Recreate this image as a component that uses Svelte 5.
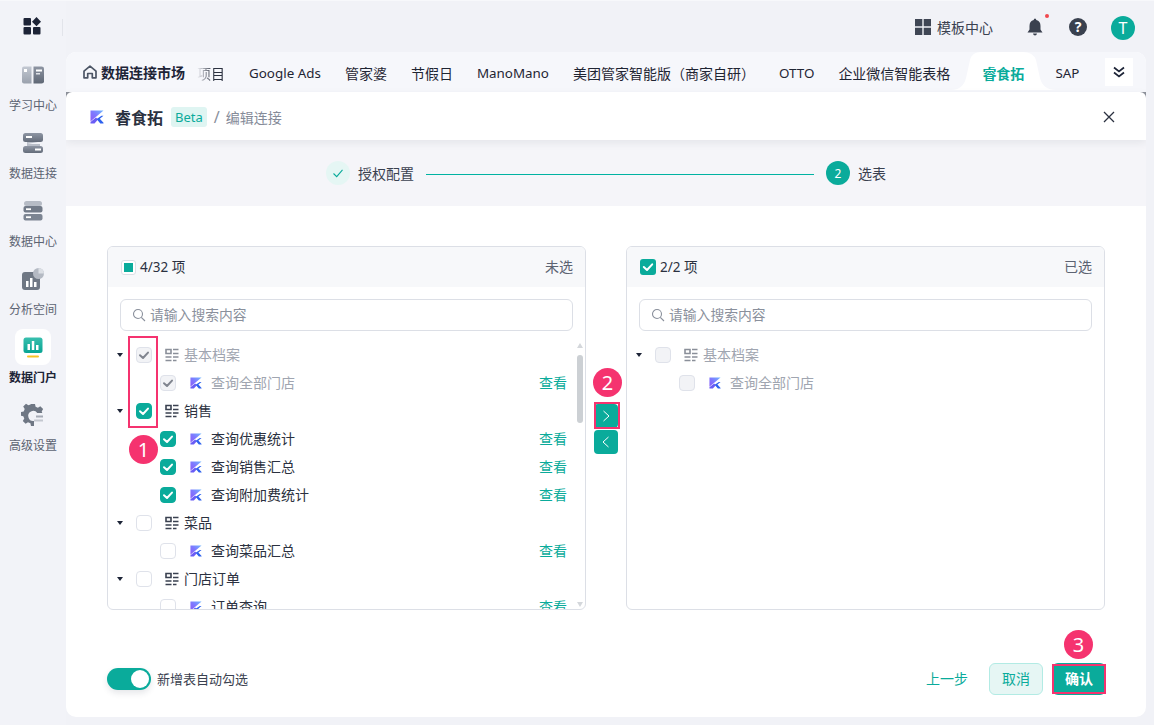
<script>
  const tabs = [
    { t:'Google Ads', l:1 }, { t:'管家婆' }, { t:'节假日' }, { t:'ManoMano', l:1 },
    { t:'美团管家智能版（商家自研）' }, { t:'OTTO', l:1 }, { t:'企业微信智能表格' }
  ];
  const nav = [
    { k:'learn', t:'学习中心' }, { k:'conn', t:'数据连接' }, { k:'center', t:'数据中心' },
    { k:'space', t:'分析空间' }, { k:'portal', t:'数据门户', active:true }, { k:'set', t:'高级设置' }
  ];
  const leftTree = [
    { p:1, t:'基本档案', s:'dis' }, { t:'查询全部门店', s:'dis' },
    { p:1, t:'销售', s:'on' }, { t:'查询优惠统计', s:'on' }, { t:'查询销售汇总', s:'on' }, { t:'查询附加费统计', s:'on' },
    { p:1, t:'菜品', s:'' }, { t:'查询菜品汇总', s:'' },
    { p:1, t:'门店订单', s:'' }, { t:'订单查询', s:'' }
  ];
  const rightTree = [ { p:1, t:'基本档案', s:'off' }, { t:'查询全部门店', s:'off' } ];
</script>

{#snippet logo(w)}
  <svg width={w} height={w} viewBox="0 0 14 14" class="logo">
    <defs><linearGradient id="lg" x1="1" y1="0" x2="0" y2="1"><stop offset="0" stop-color="#6fb8ff"/><stop offset=".5" stop-color="#7f78ff"/><stop offset="1" stop-color="#8a5cf6"/></linearGradient></defs>
    <path d="M0.500 0.500H13.500L0.500 11.500Z" fill="url(#lg)"/>
    <path d="M0.500 13.500V12L6 7.500L8 9.500L4.500 13.500Z" fill="#6a5cf5"/>
    <path d="M13.500 5.800L9.800 8.800L13.500 12.800V13.500H10.300L6.600 9.100L11.500 5.800Z" fill="#2e62ee"/>
  </svg>
{/snippet}

{#snippet tableIcon()}
  <svg width="14" height="14" viewBox="0 0 14 14" class="ticon">
    <path d="M1 1.500H6V5.500H1Z" fill="none" stroke="currentColor" stroke-width="1.600"/>
    <path d="M0.500 9H6.500M0.500 12.500H6.500" stroke="currentColor" stroke-width="1.700"/>
    <path d="M8 1.500H13.500M8 5.500H13.500M8 9H13.500M8 12.500H11.500" stroke="currentColor" stroke-width="1.600"/>
  </svg>
{/snippet}

{#snippet check(s)}
  <span class="cb {s}">
    {#if s === 'on' || s === 'dis'}
      <svg width="16" height="16" viewBox="0 0 16 16"><path d="M4 8.200L7 11L12 5.600" fill="none" stroke="currentColor" stroke-width="2" stroke-linecap="round" stroke-linejoin="round"/></svg>
    {/if}
  </span>
{/snippet}

{#snippet tree(list, action)}
  {#each list as r}
    <div class="row" class:child={!r.p} class:grey={r.s === 'dis' || r.s === 'off'}>
      {#if r.p}<span class="caret"></span>{/if}
      {@render check(r.s)}
      {#if r.p}{@render tableIcon()}{:else}{@render logo(12)}{/if}
      <span class="rt">{r.t}</span>
      {#if action && !r.p}<span class="view">查看</span>{/if}
    </div>
  {/each}
{/snippet}

{#snippet navIcon(k)}
  {#if k === 'learn'}
    <svg width="24" height="20" viewBox="0 0 24 20"><defs><linearGradient id="g1" x1="0" y1="0" x2="0" y2="1"><stop offset="0" stop-color="#c3c8d2"/><stop offset="1" stop-color="#9aa1ad"/></linearGradient><linearGradient id="g2" x1="0" y1="0" x2="0" y2="1"><stop offset="0" stop-color="#8e95a3"/><stop offset="1" stop-color="#5f6775"/></linearGradient></defs><path d="M3 1.500H10.500V18.500H3Q1 18.500 1 16.500V3.500Q1 1.500 3 1.500Z" fill="url(#g1)"/><path d="M12.500 1.500H20.500Q23 1.500 23 3.500V16.500Q23 18.500 20.500 18.500H12.500Z" fill="url(#g2)"/><rect x="3" y="4" width="3" height="3" fill="#fff"/><rect x="15" y="4.500" width="6" height="2" fill="#fff"/><rect x="15" y="8" width="4" height="1.500" fill="#dfe2e8"/></svg>
  {:else if k === 'conn'}
    <svg width="22" height="20" viewBox="0 0 22 20"><defs><linearGradient id="g3" x1="0" y1="0" x2="0" y2="1"><stop offset="0" stop-color="#8e95a3"/><stop offset="1" stop-color="#646c7a"/></linearGradient></defs><rect x="1" y="0" width="20" height="9" rx="2.500" fill="url(#g3)"/><rect x="1" y="13" width="20" height="7" rx="2.500" fill="url(#g3)"/><path d="M5 9H16L5 11H18V13H5Z" fill="#b9bec8"/><rect x="4" y="3" width="6" height="2" fill="#fff"/><rect x="13" y="15.500" width="6" height="2" fill="#fff"/></svg>
  {:else if k === 'center'}
    <svg width="20" height="20" viewBox="0 0 20 20"><rect x="1" y="0" width="18" height="5" rx="2.500" fill="#b6bbc5"/><rect x="0.500" y="5" width="19" height="6.500" rx="2" fill="#727a88"/><rect x="0.500" y="13" width="19" height="6.500" rx="2" fill="#7c8492"/><rect x="3" y="7.300" width="5" height="1.800" fill="#fff"/><rect x="3" y="15.300" width="5" height="1.800" fill="#fff"/></svg>
  {:else if k === 'space'}
    <svg width="22" height="22" viewBox="0 0 22 22"><rect x="0" y="4" width="18" height="18" rx="3" fill="#6f7784"/><circle cx="16.500" cy="5.500" r="5.500" fill="#b4b9c3"/><path d="M16.500 5.500V0A5.500 5.500 0 0 1 22 5.500Z" fill="#dcdfe5"/><rect x="4" y="13" width="2.500" height="6" fill="#fff"/><rect x="8" y="10" width="2.500" height="9" fill="#fff"/><rect x="12" y="14" width="2.500" height="5" fill="#fff"/></svg>
  {:else if k === 'portal'}
    <svg width="20" height="21" viewBox="0 0 20 21"><defs><linearGradient id="g4" x1="0" y1="0" x2="0" y2="1"><stop offset="0" stop-color="#39bfae"/><stop offset="1" stop-color="#07a493"/></linearGradient></defs><rect x="0.500" y="0.500" width="19" height="15.500" rx="2.500" fill="url(#g4)"/><rect x="4.500" y="7" width="2.500" height="6" fill="#fff"/><rect x="8.800" y="4" width="2.500" height="9" fill="#fff"/><rect x="13" y="8" width="2.500" height="5" fill="#fff"/><rect x="4" y="18.500" width="12" height="2" rx="1" fill="#f7c325"/></svg>
  {:else}
    <svg width="24" height="24" viewBox="0 0 24 24"><path d="M10 1h4l.6 2.700 2.300 1 2.400-1.400 2.800 2.800-1.400 2.300.6 1.600h-5a5 5 0 1 0-3.300 7.900v5.100h-3l-.6-2.700-2.400-1-2.400 1.500L1.800 18l1.500-2.400-1-2.300L0 12.700V9l2.700-.6 1-2.400L2.200 3.600 5 .8l2.400 1.500 2-.8Z" fill="#6f7784"/><rect x="15" y="12.500" width="7" height="2" fill="#a6abb5"/><rect x="13" y="16.500" width="9" height="2" fill="#c3c7cf"/></svg>
  {/if}
{/snippet}

<div class="app">
  <aside class="side">
    <div class="brand">
      <svg width="18" height="18" viewBox="0 0 18 18"><rect x="0.500" y="1" width="7.500" height="7.500" rx="1" fill="#1d2437"/><path d="M13.500 0L18 4.700L13.500 9.200L9 4.700Z" fill="#1d2437"/><rect x="0.500" y="10" width="7.500" height="7.500" rx="1" fill="#1d2437"/><rect x="10" y="10" width="7.500" height="7.500" rx="1" fill="#1d2437"/></svg>
      <i class="sep"></i>
    </div>
    {#each nav as n}
      <div class="nav" class:active={n.active}>
        <div class="tile">{@render navIcon(n.k)}</div>
        <span>{n.t}</span>
      </div>
    {/each}
  </aside>

  <div class="col">
    <header class="top">
      <div class="tpl">
        <svg width="16" height="16" viewBox="0 0 16 16"><path d="M0 0H7.300V7.300H0ZM8.700 0H16V7.300H8.700ZM0 8.700H7.300V16H0ZM8.700 8.700H16V16H8.700Z" fill="#3f4654"/></svg>
        <span>模板中心</span>
      </div>
      <div class="bell">
        <svg width="16" height="18" viewBox="0 0 16 18"><path d="M8 0.500Q9.200 0.500 9.300 2Q13.500 3 13.500 8V11.500L15.500 14.500H0.500L2.500 11.500V8Q2.500 3 6.700 2Q6.800 0.500 8 0.500ZM6 15.500H10Q9.700 17.500 8 17.500Q6.300 17.500 6 15.500Z" fill="#3a414f"/></svg>
        <i></i>
      </div>
      <span class="help">?</span>
      <span class="avatar">T</span>
    </header>

    <main class="card">
      <div class="tabbar">
        <div class="home">
          <svg width="14" height="14" viewBox="0 0 14 14"><path d="M1 6.200L7 1.200L13 6.200V12.800H9.300V8.500H4.700V12.800H1Z" fill="none" stroke="#4d5666" stroke-width="1.700" stroke-linejoin="round"/></svg>
          <b>数据连接市场</b>
        </div>
        <div class="tabs">
          <span class="tab faded">项目</span>
          {#each tabs as t}<span class="tab" class:latin={t.l}>{t.t}</span>{/each}
          <span class="tab cur">
            <svg class="curbg" viewBox="0 0 105 40" preserveAspectRatio="none"><path d="M0 40Q12 40 15 28L19 10Q21 2 30 2H72Q82 2 85 10L89 28Q92 40 105 40Z" fill="#fff"/></svg>
            <em>睿食拓</em>
          </span>
          <span class="tab latin">SAP</span>
        </div>
        <button class="more" aria-label="more">
          <svg width="12" height="12" viewBox="0 0 12 12"><path d="M1 1.500L6 5.500L11 1.500M1 6.500L6 10.500L11 6.500" fill="none" stroke="#1d2437" stroke-width="1.700"/></svg>
        </button>
      </div>

      <div class="headwrap">
        <div class="head">
          {@render logo(14)}
          <strong>睿食拓</strong>
          <span class="beta">Beta</span>
          <span class="slash">/</span>
          <span class="crumb">编辑连接</span>
          <svg class="close" width="12" height="12" viewBox="0 0 12 12"><path d="M1 1L11 11M11 1L1 11" stroke="#2b3140" stroke-width="1.300"/></svg>
        </div>
      </div>

      <div class="steps">
        <span class="dot done"><svg width="12" height="12" viewBox="0 0 12 12"><path d="M1.500 6.500L4.700 9.700L10.500 2.800" fill="none" stroke="#0aab9b" stroke-width="1.100"/></svg></span>
        <span class="st">授权配置</span>
        <i class="line"></i>
        <span class="dot now">2</span>
        <span class="st">选表</span>
      </div>

      <div class="transfer">
        <section class="panel">
          <div class="ph">
            <span class="hcb half"><i></i></span><span>4/32 项</span><span class="pr">未选</span>
          </div>
          <label class="search">
            <svg width="14" height="14" viewBox="0 0 14 14"><circle cx="6" cy="6" r="4.500" fill="none" stroke="#8a909c" stroke-width="1.100"/><path d="M9.300 9.300L13 13" stroke="#8a909c" stroke-width="1.100"/></svg>
            <span>请输入搜索内容</span>
          </label>
          <div class="list">
            {@render tree(leftTree, true)}
            <i class="arrow up"></i><i class="thumb"></i><i class="arrow down"></i>
          </div>
        </section>

        <div class="mid">
          <button class="mv" aria-label="add"><svg width="10" height="12" viewBox="0 0 10 12"><path d="M2.500 1L8 6L2.500 11" fill="none" stroke="#fff" stroke-width="1"/></svg></button>
          <button class="mv" aria-label="remove"><svg width="10" height="12" viewBox="0 0 10 12"><path d="M7.500 1L2 6L7.500 11" fill="none" stroke="#fff" stroke-width="1"/></svg></button>
        </div>

        <section class="panel">
          <div class="ph">
            <span class="hcb full"><svg width="16" height="16" viewBox="0 0 16 16"><path d="M3.800 8L7 11L12.200 5.300" fill="none" stroke="#fff" stroke-width="2" stroke-linecap="round" stroke-linejoin="round"/></svg></span><span>2/2 项</span><span class="pr">已选</span>
          </div>
          <label class="search">
            <svg width="14" height="14" viewBox="0 0 14 14"><circle cx="6" cy="6" r="4.500" fill="none" stroke="#8a909c" stroke-width="1.100"/><path d="M9.300 9.300L13 13" stroke="#8a909c" stroke-width="1.100"/></svg>
            <span>请输入搜索内容</span>
          </label>
          <div class="list">{@render tree(rightTree, false)}</div>
        </section>
      </div>

      <footer class="foot">
        <span class="toggle"><i></i></span>
        <span class="tl">新增表自动勾选</span>
        <span class="prev">上一步</span>
        <button class="btn cancel">取消</button>
        <button class="btn ok">确认</button>
      </footer>
    </main>
  </div>

  <i class="mark m1"></i>
  <i class="mark m2"></i>
  <i class="mark m3"></i>
  <span class="badge b1">1</span>
  <span class="badge b2">2</span>
  <span class="badge b3">3</span>
</div>

<style>
  :global(body) { margin: 0; background: #f1f2f7; }
  .app {
    position: relative; display: flex; width: 1154px; height: 725px; overflow: hidden;
    font-family: "Noto Sans", "Noto Sans CJK SC", sans-serif; font-size: 14px; color: #1f2533;
    background: #f1f2f7; border-top: 1px solid #f7f8fb; box-sizing: border-box;
  }
  .side { width: 66px; flex: none; display: flex; flex-direction: column; align-items: center; background: #f2f3f8; }
  .brand { position: relative; width: 66px; height: 51px; padding-left: 23px; padding-top: 16px; box-sizing: border-box; margin-bottom: 5px; }
  .brand svg { display: block; }
  .sep { position: absolute; left: 62px; top: 18px; width: 1px; height: 17px; background: #e2e4ea; }
  .nav { width: 66px; height: 60px; margin-bottom: 8px; display: flex; flex-direction: column; align-items: center; font-size: 12px; line-height: 24px; color: #5c6372; }
  .nav span { padding-top: 1px; }
  .tile { width: 36px; height: 36px; flex: none; display: flex; align-items: center; justify-content: center; border-radius: 8px; }
  .nav.active .tile { background: #fff; }
  .nav.active { color: #1d2437; font-weight: 700; }

  .col { flex: 1; min-width: 0; display: flex; flex-direction: column; padding-right: 8px; padding-bottom: 8px; }
  .top { height: 51px; flex: none; display: flex; align-items: center; justify-content: flex-end; padding-top: 3px; box-sizing: border-box; padding-right: 11px; }
  .tpl { display: flex; align-items: center; gap: 6px; font-size: 14px; color: #3a4150; margin-right: 34px; }
  .tpl svg { margin-bottom: 2px; }
  .tpl span { padding-bottom: 3px; }
  .bell { position: relative; width: 16px; height: 18px; margin-right: 26px; margin-bottom: 2px; }
  .bell svg { display: block; }
  .bell i { position: absolute; left: 18px; top: -4px; width: 4px; height: 4px; border-radius: 50%; background: #f0484e; }
  .help { width: 18px; height: 18px; border-radius: 50%; background: #3a414f; color: #fff; font-size: 14px; font-weight: 700; line-height: 18px; text-align: center; margin-right: 24px; margin-bottom: 2px; }
  .avatar { width: 24px; height: 24px; border-radius: 50%; background: #0aab9b; color: #fff; font-size: 16px; line-height: 24px; text-align: center; }

  .card { flex: 1; min-height: 0; background: #fff; border-radius: 10px; overflow: hidden; display: flex; flex-direction: column; }
  .tabbar { height: 40px; flex: none; display: flex; align-items: center; background: #f6f7fb; padding-left: 17px; padding-right: 13px; }
  .home { display: flex; align-items: center; gap: 4px; flex: none; width: 114px; font-size: 14px; white-space: nowrap; }
  .home b { font-weight: 700; color: #1d2437; }
  .tabs { flex: 1; min-width: 0; height: 40px; display: flex; align-items: center; gap: 24px; overflow: hidden; }
  .tab { position: relative; flex: none; font-size: 14px; white-space: nowrap; padding-top: 1px; }
  .tab.latin { font-size: 13.400px; }
  .faded { -webkit-mask-image: linear-gradient(90deg, transparent 0, #000 60%); mask-image: linear-gradient(90deg, transparent 0, #000 60%); color: #2b3140; }
  .cur { width: 42px; margin: 0 7px 0 8px; font-weight: 700; color: #0aab9b; text-align: center; }
  .cur em { position: relative; font-style: normal; }
  .curbg { position: absolute; left: -31px; top: -12px; width: 105px; height: 40px; }
  .more { flex: none; width: 28px; height: 28px; border: 0; padding: 0; background: #fff; display: flex; align-items: center; justify-content: center; }

  .headwrap { flex: none; background: #8c9099; position: relative; z-index: 1; box-shadow: 0 3px 8px rgba(40,50,70,.08); }
  .head { height: 48px; box-sizing: border-box; display: flex; align-items: center; padding: 2px 31px 0 24px; background: #fff; border-radius: 6px 6px 0 0; }
  .head strong { margin-left: 11px; font-size: 16px; font-weight: 700; color: #2b3140; }
  .beta { margin-left: 8px; height: 20px; padding: 0 4px; line-height: 20px; font-size: 13px; color: #0aab9b; background: #dff5f2; border-radius: 3px; }
  .slash { margin-left: 7px; color: #8a909c; font-size: 16px; }
  .crumb { margin-left: 6px; color: #858b99; font-size: 14px; }
  .close { margin-left: auto; }

  .steps { height: 66px; flex: none; display: flex; align-items: center; padding: 0 260px; background: #f5f5f9; box-sizing: border-box; }
  .dot { width: 24px; height: 24px; flex: none; border-radius: 50%; display: flex; align-items: center; justify-content: center; font-size: 12px; }
  .done { background: #e5f6f4; }
  .now { background: #0aab9b; color: #fff; }
  .st { margin-left: 8px; color: #3a4150; font-size: 14px; white-space: nowrap; }
  .line { flex: 1; height: 1px; background: #00b2a2; margin: 2px 12px 0; }

  .transfer { display: grid; grid-template-columns: 479px 1fr 479px; margin: 40px 41px 0 41px; height: 364px; flex: none; }
  .panel { display: flex; flex-direction: column; border: 1px solid #dcdfe6; border-radius: 6px; overflow: hidden; box-sizing: border-box; min-height: 0; }
  .ph { height: 40px; flex: none; display: flex; align-items: center; padding: 0 12px 0 13px; background: #f7f8fa; gap: 4px; font-size: 13.500px; color: #2b3140; }
  .ph span:not(.hcb) { padding-bottom: 2px; }
  .pr { margin-left: auto; font-size: 14px; color: #5c6372; }
  .hcb { width: 15px; height: 15px; flex: none; box-sizing: border-box; border-radius: 3px; display: flex; align-items: center; justify-content: center; }
  .half { border: 1px solid #dcdfe6; background: #fff; }
  .half i { width: 9px; height: 9px; background: #0aab9b; }
  .full { background: #0aab9b; width: 16px; height: 16px; }
  .search { flex: none; display: flex; align-items: center; gap: 4px; height: 32px; margin: 12px 12px 0; padding: 0 11px; box-sizing: border-box; border: 1px solid #dcdfe6; border-radius: 6px; color: #8a909c; font-size: 13.800px; }
  .search span { padding-bottom: 2px; }
  .list { position: relative; flex: 1; min-height: 0; overflow: hidden; margin-top: 10px; }
  .row { position: relative; height: 28px; display: flex; align-items: center; padding-left: 52px; padding-right: 18px; box-sizing: border-box; color: #2b3140; }
  .row:not(.child) { padding-left: 28px; }
  .row.grey { color: #a0a5b0; }
  .caret { position: absolute; left: 9px; top: 12px; width: 0; height: 0; border: 3.500px solid transparent; border-top: 4px solid #1d2437; border-bottom: 0; }
  .cb { width: 16px; height: 16px; flex: none; box-sizing: border-box; border: 1px solid #dfe2ea; border-radius: 4px; background: #fff; }
  .cb svg { display: block; margin: -1px; }
  .cb.on { background: #0aab9b; border-color: #0aab9b; color: #fff; }
  .cb.dis { background: #f2f3f6; color: #80858f; }
  .cb.off { background: #f2f3f6; }
  .ticon { flex: none; margin: 0 5px 0 13px; color: #3a4150; }
  .grey .ticon { color: #8a8f99; }
  .logo { flex: none; }
  .row.child .logo { margin: 0 9px 0 14px; }
  .rt { white-space: nowrap; padding-bottom: 2px; }
  .view { margin-left: auto; color: #0aab9b; font-size: 14px; padding-bottom: 2px; }
  .thumb { position: absolute; left: 469px; top: 14px; width: 6px; height: 68px; border-radius: 3px; background: #ccd0d4; }
  .arrow { position: absolute; left: 469px; width: 0; height: 0; border: 3px solid transparent; }
  .up { top: 2px; border-top: 0; border-bottom: 5px solid #d4d7db; }
  .down { bottom: 2px; border-bottom: 0; border-top: 5px solid #d4d7db; }

  .mid { display: flex; flex-direction: column; align-items: flex-start; padding: 158px 0 0 8px; gap: 2px; }
  .mv { width: 24px; height: 24px; border: 0; padding: 0; border-radius: 4px; background: #0aab9b; display: flex; align-items: center; justify-content: center; }

  .foot { flex: 1; display: flex; align-items: center; padding: 0 40px 0 41px; padding-top: 31px; box-sizing: border-box; height: 107px; }
  .toggle { position: relative; width: 44px; height: 22px; border-radius: 11px; background: #0aab9b; box-shadow: 0 3px 6px rgba(40,50,70,.12); }
  .toggle i { position: absolute; right: 2px; top: 2px; width: 18px; height: 18px; border-radius: 50%; background: #fff; }
  .tl { margin-left: 6px; font-size: 13px; color: #3a4150; padding-bottom: 2px; }
  .prev { margin-left: auto; margin-right: 21px; color: #0aab9b; font-size: 14px; padding-bottom: 2px; }
  .btn { width: 54px; height: 32px; padding: 0 0 2px; box-sizing: border-box; border-radius: 6px; font: inherit; font-size: 14px; }
  .cancel { background: #e6f6f4; border: 1px solid #b2ebe4; color: #0aab9b; margin-right: 9px; }
  .ok { background: #0aab9b; border: 0; color: #fff; font-weight: 700; }

  .mark { position: absolute; box-sizing: border-box; border: 2px solid #f5336f; pointer-events: none; }
  .m1 { left: 128px; top: 335px; width: 30px; height: 92px; }
  .m2 { left: 594px; top: 401px; width: 26px; height: 27px; }
  .m3 { left: 1052px; top: 663px; width: 54px; height: 30px; }
  .badge { position: absolute; width: 29px; height: 29px; border-radius: 50%; background: #f5336f; color: #fff; font-size: 20px; line-height: 29px; text-align: center; }
  .b1 { left: 129px; top: 434px; }
  .b2 { left: 593px; top: 367px; }
  .b3 { left: 1064px; top: 629px; }
</style>
